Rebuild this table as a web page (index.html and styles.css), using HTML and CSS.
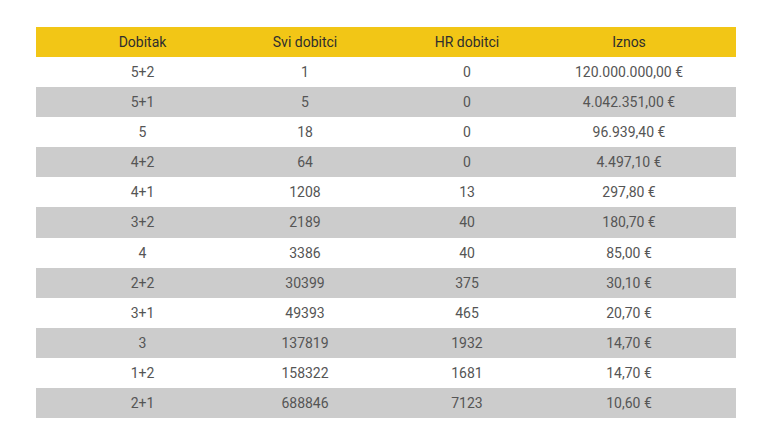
FILE: index.html
```html
<!DOCTYPE html>
<html lang="hr">
<head>
<meta charset="utf-8">
<link rel="stylesheet" href="styles.css">
</head>
<body>
<div class="wrap">
<table class="prizes">
<colgroup><col class="c1"><col class="c2"><col class="c3"><col class="c4"></colgroup>
<thead>
<tr><th>Dobitak</th><th>Svi dobitci</th><th>HR dobitci</th><th>Iznos</th></tr>
</thead>
<tbody>
<tr><td>5+2</td><td>1</td><td>0</td><td>120.000.000,00 €</td></tr>
<tr><td>5+1</td><td>5</td><td>0</td><td>4.042.351,00 €</td></tr>
<tr><td>5</td><td>18</td><td>0</td><td>96.939,40 €</td></tr>
<tr><td>4+2</td><td>64</td><td>0</td><td>4.497,10 €</td></tr>
<tr><td>4+1</td><td>1208</td><td>13</td><td>297,80 €</td></tr>
<tr><td>3+2</td><td>2189</td><td>40</td><td>180,70 €</td></tr>
<tr><td>4</td><td>3386</td><td>40</td><td>85,00 €</td></tr>
<tr><td>2+2</td><td>30399</td><td>375</td><td>30,10 €</td></tr>
<tr><td>3+1</td><td>49393</td><td>465</td><td>20,70 €</td></tr>
<tr><td>3</td><td>137819</td><td>1932</td><td>14,70 €</td></tr>
<tr><td>1+2</td><td>158322</td><td>1681</td><td>14,70 €</td></tr>
<tr><td>2+1</td><td>688846</td><td>7123</td><td>10,60 €</td></tr>
</tbody>
</table>
</div>
</body>
</html>
```
FILE: styles.css
```css
html, body {
  margin: 0;
  padding: 0;
  background: #fff;
}
.wrap {
  padding: 27.3px 24px 0 36px;
}
.prizes {
  width: 700px;
  border-collapse: collapse;
  table-layout: fixed;
  font-family: Roboto, "Liberation Sans", sans-serif;
  font-size: 14px;
}
.c1, .c4 { width: 188px; }
.c2, .c3 { width: 162px; }
.prizes th, .prizes td {
  padding: 0;
  text-align: center;
  vertical-align: middle;
  box-sizing: border-box;
}
.prizes th {
  height: 29.6px;
  background: #f2c616;
  color: #2e2e2e;
  font-weight: 400;
}
.prizes td {
  height: 30.12px;
  color: #555;
}
.prizes th:first-child, .prizes td:first-child { padding-left: 25px; }
.prizes th:last-child, .prizes td:last-child { padding-right: 26px; }
.prizes tbody tr:nth-child(even) td {
  background: #cccccc;
}
```
